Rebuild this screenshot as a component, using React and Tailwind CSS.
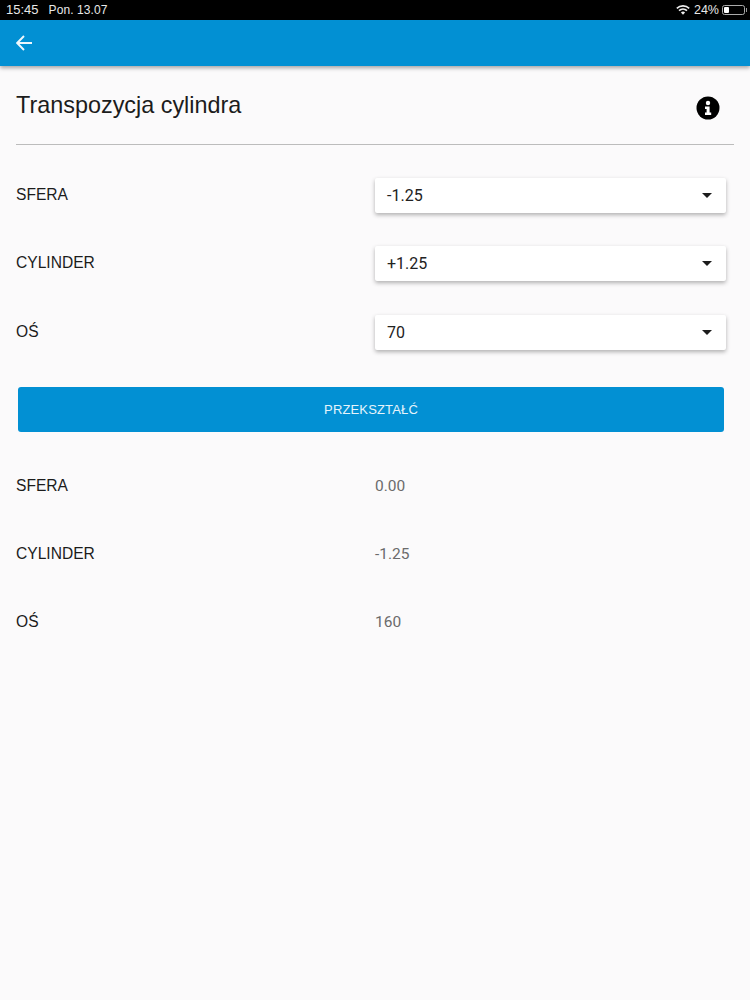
const selects = [
  { label: "SFERA", value: "-1.25" },
  { label: "CYLINDER", value: "+1.25" },
  { label: "OŚ", value: "70" },
];

const results = [
  { label: "SFERA", value: "0.00" },
  { label: "CYLINDER", value: "-1.25" },
  { label: "OŚ", value: "160" },
];

const StatusBar = () => (
  <div className="flex h-5 items-center justify-between bg-black pl-[6px] pr-[3px] text-[13px] leading-5 text-[#e8e8e8]">
    <div className="flex items-center gap-[10px]">
      <span>15:45</span>
      <span className="text-xs tracking-[0.1px]">Pon. 13.07</span>
    </div>
    <div className="flex items-center gap-[3px]">
      <svg width="14" height="10" viewBox="0 0 14 10" fill="none" stroke="#eee" strokeWidth="1.6" className="mr-[1px]">
        <path d="M.8 3.4a9 9 0 0 1 12.4 0" />
        <path d="M3 5.6a6 6 0 0 1 8 0" />
        <path d="M7 9.8 4.9 7.6a3 3 0 0 1 4.2 0Z" fill="#eee" stroke="none" />
      </svg>
      <span className="text-[12.5px]">24%</span>
      <div className="flex h-[10px] w-[23px] items-center rounded-[2.5px] border border-[#aaa] p-[1px]">
        <div className="h-full w-[5px] rounded-[1px] bg-white" />
      </div>
      <div className="-ml-[2px] h-1 w-[1px] bg-[#999]" />
    </div>
  </div>
);

const Row = ({ label, className, labelClassName, children }) => (
  <div className={`flex items-center ${className}`}>
    <div className={`w-[359px] text-[15.6px] text-[#1c1c1c] ${labelClassName}`}>{label}</div>
    {children}
  </div>
);

export default function App() {
  return (
    <div className="min-h-[1000px] bg-[#fbfafb] font-['Liberation_Sans',sans-serif]">
      <StatusBar />
      <header className="flex h-[46px] items-center bg-[#0290d3] pl-4 shadow-[0_2px_4px_rgba(0,0,0,0.35)]">
        <svg width="16" height="16" viewBox="0 0 16 16" fill="none" stroke="#eef7fc" strokeWidth="1.9">
          <path d="M16 8H1.5M8 1 1.2 8 8 15" />
        </svg>
      </header>

      <main className="px-4">
        <div className="flex h-[79px] items-center justify-between border-b border-[#bcbcbc]">
          <h1 className="pt-[1px] text-[23.4px] text-[#1c1c1c]">Transpozycja cylindra</h1>
          <svg width="24" height="24" viewBox="0 0 24 24" className="mr-[14px] mt-[5px]">
            <circle cx="12" cy="12" r="11.5" fill="#000" />
            <circle cx="12" cy="7" r="2.2" fill="#fff" />
            <path d="M9 10.5h4.6v6h1.6v2.4H9v-2.4h1.6V13H9Z" fill="#fff" />
          </svg>
        </div>

        <section className="mt-[16px]">
          {selects.map((item) => (
            <Row key={item.label} label={item.label} className="h-[68.5px]" labelClassName="pb-[2px]">
              <div className="flex h-[35px] w-[351px] items-center justify-between rounded-[2px] bg-white pl-3 pr-[14px] font-['Roboto',sans-serif] text-base text-[#222] shadow-[0_2px_4px_rgba(0,0,0,0.3)]">
                <span className="pt-[1px]">{item.value}</span>
                <div className="h-0 w-0 border-x-[5px] border-t-[5px] border-x-transparent border-t-[#1c1c1c]" />
              </div>
            </Row>
          ))}
        </section>

        <button className="mx-[2px] mt-[20.7px] block h-[45px] w-[706px] rounded-[3px] bg-[#0290d3] text-[13px] tracking-[0.15px] text-[#e6f4fb]">
          PRZEKSZTAŁĆ
        </button>

        <section className="mt-[19px]">
          {results.map((item) => (
            <Row key={item.label} label={item.label} className="h-[68px] pt-[2px]">
              <span className="font-['Roboto',sans-serif] text-[15.5px] text-[#6b6b6b]">{item.value}</span>
            </Row>
          ))}
        </section>
      </main>
    </div>
  );
}
